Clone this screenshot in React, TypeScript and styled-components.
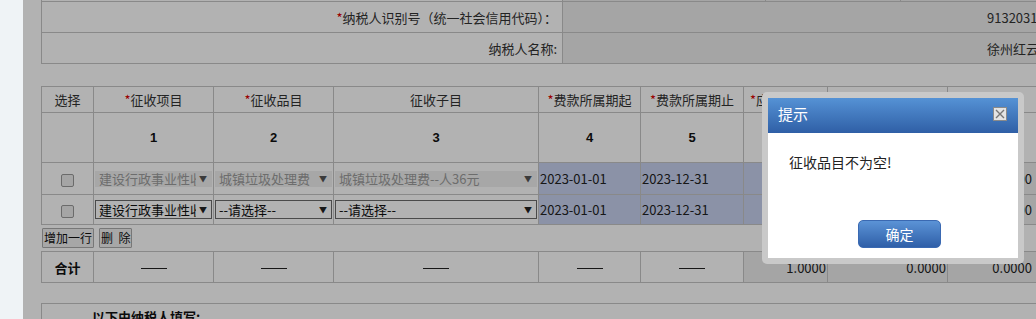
import React from 'react';
import styled, { createGlobalStyle } from 'styled-components';

const Global = createGlobalStyle`
  html, body { margin: 0; padding: 0; overflow: hidden; background: #eff3f6; }
  body {
    width: 1036px; height: 319px;
    font-family: "Noto Sans CJK SC", "Microsoft YaHei", sans-serif;
    font-size: 13px; color: #333;
  }
  * { box-sizing: border-box; }
`;

const Page = styled.div`
  display: flex;
  height: 319px;
  overflow: hidden;
  position: relative;
`;

const SideStrip = styled.div`
  width: 23px;
  flex: none;
  background: #eff3f6;
`;

const Main = styled.main`
  position: relative;
  flex: 1;
  min-width: 0;
  background: #fff;
  padding-left: 18px;
  overflow: hidden;
`;

const Content = styled.div`
  width: 1300px;
  margin-top: -30px;
`;

const Col = styled.col<{ $w?: number }>`
  width: ${p => (p.$w ? `${p.$w}px` : 'auto')};
`;

const InfoTable = styled.table`
  border-collapse: collapse;
  table-layout: fixed;
  width: 1300px;
`;

const InfoCell = styled.td<{ $value?: boolean }>`
  border: 1px solid #c4c4c4;
  height: 31px;
  padding: 0 ${p => (p.$value ? '0 0 424px' : '5px 0 0')};
  text-align: ${p => (p.$value ? 'left' : 'right')};
  background: ${p => (p.$value ? '#ededed' : '#fff')};
  color: #333;
  white-space: nowrap;
  overflow: hidden;
  font-size: 13px;
`;

const Req = styled.span`
  color: #d00;
`;

const GridTable = styled.table<{ $gap: number }>`
  border-collapse: collapse;
  table-layout: fixed;
  width: 996px;
  margin-top: ${p => p.$gap}px;
`;

const Th = styled.td<{ $h: number }>`
  border: 1px solid #c4c4c4;
  height: ${p => p.$h}px;
  text-align: center;
  padding: 0;
  white-space: nowrap;
  overflow: hidden;
  color: #333;
  font-size: 13px;
`;

const NumTh = styled(Th)`
  font-family: "Liberation Sans", Arial, sans-serif;
  font-weight: bold;
  color: #111;
`;

type Tone = 'plain' | 'date' | 'value';

const Td = styled.td<{ $h: number; $tone?: Tone; $align?: string; $pr?: number }>`
  border: 1px solid #c4c4c4;
  height: ${p => p.$h}px;
  padding: 0 ${p => p.$pr ?? 1}px 0 1px;
  text-align: ${p => p.$align || 'left'};
  white-space: nowrap;
  overflow: hidden;
  color: #222;
  font-size: 13px;
  background: ${p =>
    p.$tone === 'date' ? '#c8d2f0' : p.$tone === 'value' ? '#ededed' : '#fff'};
`;

const Check = styled.span`
  display: inline-block;
  width: 13px;
  height: 13px;
  border: 1px solid #9a9a9a;
  border-radius: 2px;
  background: #ececec;
  vertical-align: middle;
`;

const SelectBox = styled.div<{ $disabled?: boolean }>`
  display: flex;
  align-items: center;
  height: ${p => (p.$disabled ? 16 : 19)}px;
  border: 1px solid ${p => (p.$disabled ? 'transparent' : '#6b6b6b')};
  background: ${p => (p.$disabled ? '#f0f0f0' : '#fff')};
  color: ${p => (p.$disabled ? '#9c9c9c' : '#111')};
  padding: 0 3px 0 3px;
  font-size: 13px;
  line-height: 16px;
`;

const SelectText = styled.span`
  flex: 1;
  min-width: 0;
  overflow: hidden;
  white-space: nowrap;
`;

const Arrow = styled.span<{ $disabled?: boolean }>`
  flex: none;
  font-size: 8px;
  color: ${p => (p.$disabled ? '#555' : '#222')};
  margin-left: 3px;
  margin-right: 1px;
`;

const ButtonRow = styled.div`
  display: flex;
  gap: 5px;
  height: 26px;
  padding: 3px 0 0 1px;
`;

const SmallButton = styled.button`
  height: 20px;
  padding: 0 1px;
  border: 1px solid #ababab;
  border-radius: 1px;
  background: #f0f0f0;
  color: #111;
  font-family: "Noto Sans CJK SC", sans-serif;
  font-size: 12px;
  line-height: 18px;
  letter-spacing: 0;
`;

const Dash = styled.span`
  display: inline-block;
  width: 26px;
  border-top: 1px solid #222;
  vertical-align: middle;
`;

const BoldLabel = styled.span`
  font-weight: bold;
  color: #111;
`;

const BottomBox = styled.div`
  margin-top: 20px;
  width: 1100px;
  height: 60px;
  border: 1px solid #c4c4c4;
  padding: 3px 0 0 50px;
  font-weight: bold;
  color: #111;
  font-size: 13px;
`;

const Overlay = styled.div`
  position: absolute;
  inset: 0;
  background: rgba(0, 0, 0, 0.3);
`;

const Dialog = styled.div`
  position: absolute;
  left: 762px;
  top: 92px;
  width: 262px;
  height: 172px;
  padding: 6px;
  background: #c9c9c9;
  border-radius: 5px;
  display: flex;
  flex-direction: column;
`;

const DialogTitle = styled.div`
  height: 35px;
  flex: none;
  display: flex;
  align-items: center;
  justify-content: space-between;
  padding: 0 11px 4px 10px;
  background: linear-gradient(#5592d5, #2f5fa6);
  color: #fff;
  font-size: 15px;
`;

const CloseButton = styled.span`
  width: 14px;
  height: 14px;
  margin-top: 1px;
  border: 1px solid #8a8a8a;
  background: #e4e4e4;
  display: flex;
  align-items: center;
  justify-content: center;
`;

const DialogBody = styled.div`
  flex: 1;
  background: #fff;
  display: flex;
  flex-direction: column;
  padding: 18px 0 0 21px;
`;

const Message = styled.div`
  font-size: 14px;
  line-height: 22px;
  color: #222;
`;

const OkButton = styled.button`
  margin: 47px 0 0 69px;
  width: 83px;
  height: 28px;
  border: 1px solid #3a69b2;
  border-radius: 5px;
  background: linear-gradient(#5b93d6, #2f5fa8);
  color: #fff;
  font-family: "Noto Sans CJK SC", sans-serif;
  font-size: 14px;
`;

const widths = [52, 120, 120, 205, 102, 103, 84, 120, 90];

const ColGroup = () => (
  <colgroup>
    {widths.map((w, i) => (
      <Col key={i} $w={w} />
    ))}
  </colgroup>
);

const Sel = ({ text, disabled }: { text: string; disabled?: boolean }) => (
  <SelectBox $disabled={disabled}>
    <SelectText>{text}</SelectText>
    <Arrow $disabled={disabled}>▼</Arrow>
  </SelectBox>
);

export default function App() {
  return (
    <>
      <Global />
      <Page>
        <SideStrip />
        <Main>
          <Content>
            <InfoTable>
              <colgroup>
                <Col $w={521} />
                <Col $w={203} />
                <Col $w={135} />
                <Col />
              </colgroup>
              <tbody>
                <tr>
                  <InfoCell />
                  <InfoCell $value />
                  <InfoCell $value />
                  <InfoCell $value />
                </tr>
                <tr>
                  <InfoCell>
                    <Req>*</Req>纳税人识别号（统一社会信用代码）：
                  </InfoCell>
                  <InfoCell $value colSpan={3}>
                    91320311MA1XPN5J4Q
                  </InfoCell>
                </tr>
                <tr>
                  <InfoCell>纳税人名称:</InfoCell>
                  <InfoCell $value colSpan={3}>
                    徐州红云环保科技有限公司
                  </InfoCell>
                </tr>
              </tbody>
            </InfoTable>

            <GridTable $gap={22}>
              <ColGroup />
              <tbody>
                <tr>
                  <Th $h={26}>选择</Th>
                  <Th $h={26}><Req>*</Req>征收项目</Th>
                  <Th $h={26}><Req>*</Req>征收品目</Th>
                  <Th $h={26}>征收子目</Th>
                  <Th $h={26}><Req>*</Req>费款所属期起</Th>
                  <Th $h={26}><Req>*</Req>费款所属期止</Th>
                  <Th $h={26}><Req>*</Req>应缴费数量</Th>
                  <Th $h={26}>缴费标准</Th>
                  <Th $h={26}>应缴费额</Th>
                </tr>
                <tr>
                  <Th $h={50} />
                  <NumTh $h={50}>1</NumTh>
                  <NumTh $h={50}>2</NumTh>
                  <NumTh $h={50}>3</NumTh>
                  <NumTh $h={50}>4</NumTh>
                  <NumTh $h={50}>5</NumTh>
                  <NumTh $h={50}>6</NumTh>
                  <NumTh $h={50}>7</NumTh>
                  <NumTh $h={50}>8</NumTh>
                </tr>
                <tr>
                  <Td $h={32} $align="center"><Check /></Td>
                  <Td $h={32}><Sel disabled text="建设行政事业性收费" /></Td>
                  <Td $h={32}><Sel disabled text="城镇垃圾处理费" /></Td>
                  <Td $h={32}><Sel disabled text="城镇垃圾处理费--人36元" /></Td>
                  <Td $h={32} $tone="date">2023-01-01</Td>
                  <Td $h={32} $tone="date">2023-12-31</Td>
                  <Td $h={32} $tone="date" $align="right">1.0000</Td>
                  <Td $h={32} $tone="value" $align="right">36.0000</Td>
                  <Td $h={32} $tone="value" $align="right" $pr={5}>0.0000</Td>
                </tr>
                <tr>
                  <Td $h={30} $align="center"><Check /></Td>
                  <Td $h={30}><Sel text="建设行政事业性收费" /></Td>
                  <Td $h={30}><Sel text="--请选择--" /></Td>
                  <Td $h={30}><Sel text="--请选择--" /></Td>
                  <Td $h={30} $tone="date">2023-01-01</Td>
                  <Td $h={30} $tone="date">2023-12-31</Td>
                  <Td $h={30} $tone="date" $align="right"></Td>
                  <Td $h={30} $tone="value" $align="right">0.0000</Td>
                  <Td $h={30} $tone="value" $align="right" $pr={5}>0.0000</Td>
                </tr>
              </tbody>
            </GridTable>

            <ButtonRow>
              <SmallButton>增加一行</SmallButton>
              <SmallButton>删&nbsp;&nbsp;除</SmallButton>
            </ButtonRow>

            <GridTable $gap={0}>
              <ColGroup />
              <tbody>
                <tr>
                  <Td $h={31} $align="center"><BoldLabel>合计</BoldLabel></Td>
                  <Td $h={31} $align="center"><Dash /></Td>
                  <Td $h={31} $align="center"><Dash /></Td>
                  <Td $h={31} $align="center"><Dash /></Td>
                  <Td $h={31} $align="center"><Dash /></Td>
                  <Td $h={31} $align="center"><Dash /></Td>
                  <Td $h={31} $tone="value" $align="right">1.0000</Td>
                  <Td $h={31} $tone="value" $align="right">0.0000</Td>
                  <Td $h={31} $tone="value" $align="right" $pr={5}>0.0000</Td>
                </tr>
              </tbody>
            </GridTable>

            <BottomBox>以下由纳税人填写:</BottomBox>
          </Content>
          <Overlay />
        </Main>
        <Dialog>
          <DialogTitle>
            提示
            <CloseButton>
              <svg width="10" height="10" viewBox="0 0 10 10">
                <path d="M1 1 L9 9 M9 1 L1 9" stroke="#777" strokeWidth="1.4" />
              </svg>
            </CloseButton>
          </DialogTitle>
          <DialogBody>
            <Message>征收品目不为空!</Message>
            <OkButton>确定</OkButton>
          </DialogBody>
        </Dialog>
      </Page>
    </>
  );
}
